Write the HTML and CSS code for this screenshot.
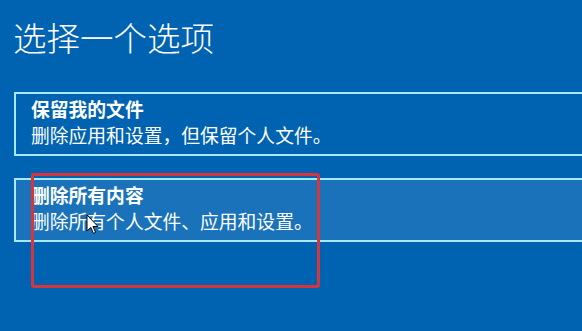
FILE: index.html
```html
<!DOCTYPE html>
<html lang="zh-CN">
<head>
<meta charset="utf-8">
<link rel="stylesheet" href="styles.css">
</head>
<body>
<main class="page">
  <h1 class="title">选择一个选项</h1>
  <div class="options">
    <div class="option">
      <div class="option-name">保留我的文件</div>
      <div class="option-desc">删除应用和设置，但保留个人文件。</div>
    </div>
    <div class="option option-hover">
      <div class="option-name">删除所有内容</div>
      <div class="option-desc">删除所有个人文件、应用和设置。</div>
    </div>
  </div>
  <div class="highlight"></div>
  <svg class="cursor" width="13" height="21" viewBox="0 0 13 21">
    <path d="M1 1 L1 17 L4.8 13.4 L7.4 19.4 L9.6 18.4 L7 12.5 L12 12.5 Z" fill="#fff" stroke="#000" stroke-width="1" stroke-linejoin="round"/>
  </svg>
</main>
</body>
</html>
```

FILE: styles.css
```css
html, body {
  margin: 0;
  padding: 0;
}

body {
  background: #0063b1;
  width: 582px;
  height: 331px;
  overflow: hidden;
  font-family: "Noto Sans CJK SC", "Noto Sans", sans-serif;
  color: #fff;
}

.page {
  position: relative;
  width: 582px;
  height: 331px;
  overflow: hidden;
}

.title {
  margin: 0;
  padding: 17px 0 0 13px;
  font-size: 33.5px;
  line-height: 40px;
  font-weight: 300;
}

.options {
  margin-top: 35px;
  margin-left: 14px;
  display: flex;
  flex-direction: column;
  gap: 22px;
}

.option {
  border: 2px solid #a9e9f7;
  border-right: 0;
  padding: 2px 0 6px 15px;
  font-size: 18.8px;
  line-height: 26px;
  white-space: nowrap;
}

.option-hover {
  background: #1a73ba;
}

.option-name {
  font-weight: 700;
}

.option-desc {
  font-weight: 400;
}

.highlight {
  position: absolute;
  left: 31px;
  top: 173px;
  width: 283px;
  height: 109px;
  border: 3px solid #d8353b;
  border-radius: 3px;
}

.cursor {
  position: absolute;
  left: 86px;
  top: 214px;
}
```
